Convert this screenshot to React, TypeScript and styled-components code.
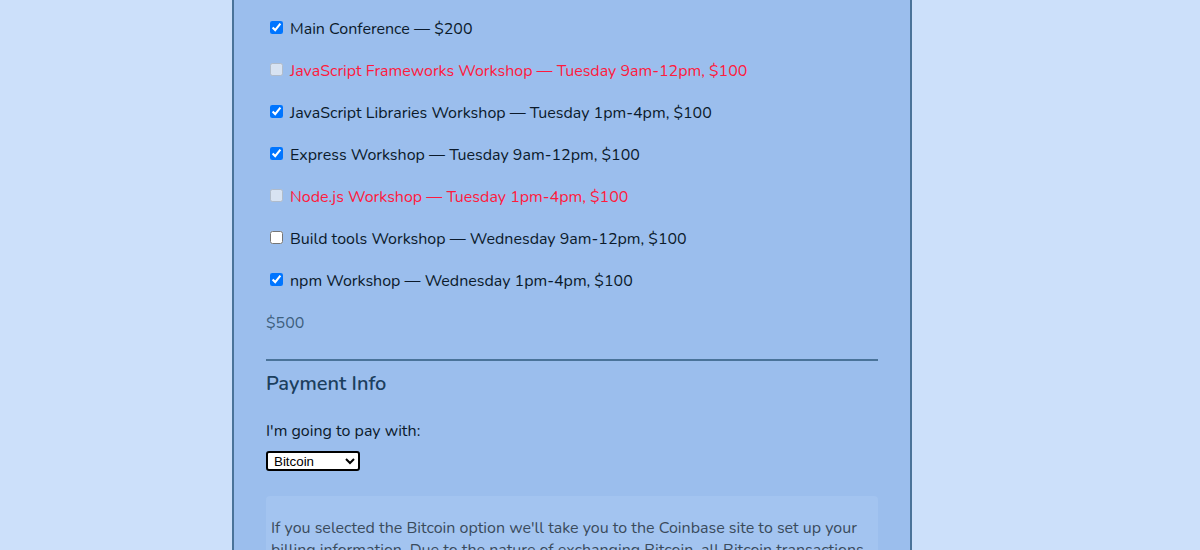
import React from "react";
import styled, { createGlobalStyle } from "styled-components";

const Global = createGlobalStyle`
  html, body { margin: 0; padding: 0; }
  body {
    background: #cce0fa;
    font-family: "Nunito", "Lato", "Noto Sans", sans-serif;
    font-size: 16px;
    color: #0b1a2b;
  }
`;

const Page = styled.div`
  display: flex;
  justify-content: flex-start;
  padding-left: 232px;
  height: 550px;
  overflow: hidden;
`;

const Panel = styled.form`
  background: #9bbeed;
  border-left: 2px solid #4a7399;
  border-right: 2px solid #4a7399;
  padding: 19px 32px 0 32px;
  box-sizing: content-box;
  width: 612px;
`;

const Activities = styled.div`
  display: flex;
  flex-direction: column;
  gap: 22px;
`;

const Row = styled.label<{ $disabled?: boolean }>`
  display: flex;
  align-items: center;
  height: 20px;
  line-height: 20px;
  color: ${(p) => (p.$disabled ? "#ff1a3d" : "#0b1a2b")};
  input {
    margin: -4px 7px 0 4px;
    width: 13px;
    height: 13px;
  }
`;

const Total = styled.div`
  height: 20px;
  line-height: 20px;
  color: #3e5f7e;
`;

const Rule = styled.hr`
  border: none;
  height: 2px;
  background: #4a7399;
  margin: 26px 0 0 0;
`;

const Heading = styled.h2`
  margin: 11px 0 0 0;
  font-size: 20px;
  line-height: 24px;
  font-weight: 600;
  color: #1c3f5e;
`;

const PayLabel = styled.label`
  display: block;
  margin-top: 25px;
  height: 20px;
  line-height: 20px;
`;

const Select = styled.select`
  display: block;
  margin-top: 10px;
  width: 94px;
  height: 20px;
  font-family: "Liberation Sans", Arial, sans-serif;
  font-size: 13.33px;
  border: 2px solid #000;
  border-radius: 3px;
  background: #fff;
  color: #000;
  padding: 0 0 0 2px;
`;

const InfoBox = styled.div`
  margin-top: 25px;
  background: #a3c4f0;
  border-radius: 4px;
  padding: 15px 5px 0 5px;
  color: #3a4b5c;
  line-height: 22px;
`;

const InfoText = styled.p`
  margin: 0;
  padding-top: 6px;
`;

const items = [
  { label: "Main Conference — $200", checked: true },
  { label: "JavaScript Frameworks Workshop — Tuesday 9am-12pm, $100", disabled: true },
  { label: "JavaScript Libraries Workshop — Tuesday 1pm-4pm, $100", checked: true },
  { label: "Express Workshop — Tuesday 9am-12pm, $100", checked: true },
  { label: "Node.js Workshop — Tuesday 1pm-4pm, $100", disabled: true },
  { label: "Build tools Workshop — Wednesday 9am-12pm, $100" },
  { label: "npm Workshop — Wednesday 1pm-4pm, $100", checked: true },
];

export default function App() {
  return (
    <>
      <Global />
      <Page>
        <Panel onSubmit={(e) => e.preventDefault()}>
          <Activities>
            {items.map((it) => (
              <Row key={it.label} $disabled={it.disabled}>
                <input type="checkbox" defaultChecked={it.checked} disabled={it.disabled} />
                {it.label}
              </Row>
            ))}
            <Total>$500</Total>
          </Activities>
          <Rule />
          <Heading>Payment Info</Heading>
          <PayLabel htmlFor="payment">I'm going to pay with:</PayLabel>
          <Select id="payment" defaultValue="bitcoin">
            <option value="credit">Credit Card</option>
            <option value="paypal">PayPal</option>
            <option value="bitcoin">Bitcoin</option>
          </Select>
          <InfoBox>
            <InfoText>
              If you selected the Bitcoin option we'll take you to the Coinbase site to set up your
              billing information. Due to the nature of exchanging Bitcoin, all Bitcoin transactions
              will be final.
            </InfoText>
          </InfoBox>
        </Panel>
      </Page>
    </>
  );
}
